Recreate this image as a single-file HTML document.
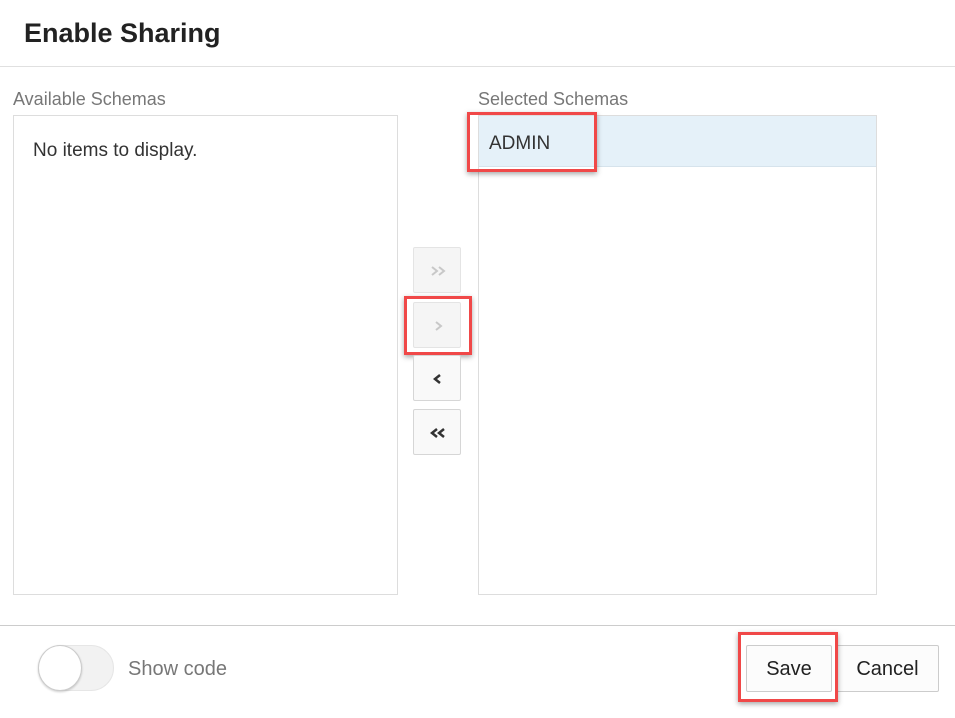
<!DOCTYPE html>
<html><head><style>
body{margin:0;width:955px;height:718px;background:#fff;font-family:"Liberation Sans",sans-serif;position:relative;overflow:hidden;color:#333}
.a{position:absolute}
.box{position:absolute;border:1px solid #ddd;background:#fff}
.btn{position:absolute;left:413px;width:48px;height:46px;border:1px solid #d6d6d6;border-radius:2px;background:#f9f9f9;box-sizing:border-box}
.btn svg{position:absolute;left:0;top:0}
.dis{background:#f5f5f5;border-color:#e4e4e4}
.red{position:absolute;border:3px solid #f04848;box-shadow:0 2px 5px rgba(0,0,0,.35)}
</style></head><body>
<div class="a" style="left:24px;top:18px;font-size:27px;font-weight:bold;color:#222">Enable Sharing</div>
<div class="a" style="left:0;top:66px;width:955px;height:1px;background:#e0e0e0"></div>
<div class="a" style="left:13px;top:89px;font-size:18px;color:#777">Available Schemas</div>
<div class="a" style="left:478px;top:89px;font-size:18px;color:#777">Selected Schemas</div>
<div class="box" style="left:13px;top:115px;width:383px;height:478px"></div>
<div class="a" style="left:33px;top:140px;font-size:19px;color:#333">No items to display.</div>
<div class="box" style="left:478px;top:115px;width:397px;height:478px"></div>
<div class="a" style="left:479px;top:116px;width:397px;height:50px;background:#e5f1f9;border-bottom:1px solid #d6e3ec"></div>
<div class="a" style="left:489px;top:133px;font-size:19px;color:#333">ADMIN</div>
<div class="red" style="left:467px;top:112px;width:124px;height:54px"></div>
<div class="btn dis" style="top:247px"><svg width="48" height="46"><path d="M18 19l5 4-5 4M25 19l5 4-5 4" fill="none" stroke="#c8c8c8" stroke-width="2"/></svg></div>
<div class="btn dis" style="top:302px"><svg width="48" height="46"><path d="M22 19l5 4-5 4" fill="none" stroke="#c8c8c8" stroke-width="2"/></svg></div>
<div class="red" style="left:404px;top:296px;width:62px;height:53px"></div>
<div class="btn" style="top:355px"><svg width="48" height="46"><path d="M26 19l-5 4 5 4" fill="none" stroke="#333" stroke-width="2.5"/></svg></div>
<div class="btn" style="top:409px"><svg width="48" height="46"><path d="M23 19l-5 4 5 4M30 19l-5 4 5 4" fill="none" stroke="#333" stroke-width="2.5"/></svg></div>
<div class="a" style="left:0;top:625px;width:955px;height:1px;background:#ccc"></div>
<div class="a" style="left:38px;top:645px;width:76px;height:46px;border-radius:23px;background:#f2f2f2;border:1px solid #e6e6e6;box-sizing:border-box"></div>
<div class="a" style="left:38px;top:645px;width:44px;height:46px;border-radius:50%;background:#fff;border:1px solid #ccc;box-sizing:border-box;box-shadow:0 1px 2px rgba(0,0,0,.2)"></div>
<div class="a" style="left:128px;top:658px;font-size:20px;color:#777">Show code</div>
<div class="a" style="left:746px;top:645px;width:86px;height:47px;border:1px solid #ccc;border-radius:2px;box-sizing:border-box;background:#fcfcfc;font-size:20px;text-align:center;line-height:47px;color:#222">Save</div>
<div class="a" style="left:836px;top:645px;width:103px;height:47px;border:1px solid #ccc;border-radius:2px;box-sizing:border-box;background:#fcfcfc;font-size:20px;text-align:center;line-height:47px;color:#222">Cancel</div>
<div class="red" style="left:738px;top:632px;width:94px;height:64px"></div>
</body></html>
